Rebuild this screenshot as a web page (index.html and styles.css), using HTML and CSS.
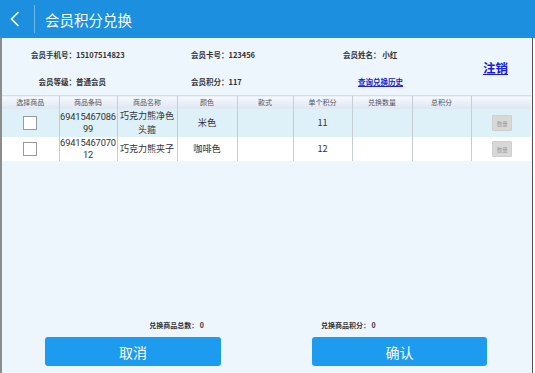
FILE: index.html
```html
<!DOCTYPE html>
<html lang="zh-CN">
<head>
    <meta charset="UTF-8">
    <title>会员积分兑换</title>
    <link rel="stylesheet" href="styles.css">
</head>
<body>
    <div class="topbar">
        <a class="back" href="#">
            <svg width="10" height="16" viewBox="0 0 10 16"><path d="M8.5 1 L1.5 8 L8.5 15" fill="none" stroke="#fff" stroke-width="1.6"/></svg>
        </a>
        <span class="divider"></span>
        <h1>会员积分兑换</h1>
    </div>

    <div class="screen">
        <div class="member-info">
            <div class="info-grid">
                <div class="item col1"><span class="lbl">会员手机号：</span>15107514823</div>
                <div class="item"><span>会员卡号：</span>123456</div>
                <div class="item"><span>会员姓名：</span>&nbsp;小红</div>
                <div class="item col1"><span class="lbl">会员等级：</span>普通会员</div>
                <div class="item"><span>会员积分：</span>117</div>
                <div class="item"><a class="history" href="#">查询兑换历史</a></div>
            </div>
            <a class="logout" href="#">注销</a>
        </div>

        <table class="goods">
            <colgroup>
                <col style="width:57px"><col style="width:58px"><col style="width:60px">
                <col style="width:60px"><col style="width:56px"><col style="width:59px">
                <col style="width:60px"><col style="width:59px"><col style="width:60px">
            </colgroup>
            <thead>
                <tr>
                    <th>选择商品</th><th>商品条码</th><th>商品名称</th><th>颜色</th><th>款式</th>
                    <th>单个积分</th><th>兑换数量</th><th>总积分</th><th></th>
                </tr>
            </thead>
            <tbody>
                <tr class="row-a">
                    <td><span class="check"></span></td>
                    <td class="code">69415467086<br>99</td>
                    <td class="name">巧克力熊净色<br>头箍</td>
                    <td>米色</td>
                    <td></td>
                    <td>11</td>
                    <td></td>
                    <td></td>
                    <td><span class="qty-btn">数量</span></td>
                </tr>
                <tr class="row-b">
                    <td><span class="check"></span></td>
                    <td class="code">69415467070<br>12</td>
                    <td class="name">巧克力熊夹子</td>
                    <td>咖啡色</td>
                    <td></td>
                    <td>12</td>
                    <td></td>
                    <td></td>
                    <td><span class="qty-btn">数量</span></td>
                </tr>
            </tbody>
        </table>

        <div class="spacer"></div>

        <div class="summary">
            <div class="sum-left">兑换商品总数：&nbsp;0</div>
            <div class="sum-right">兑换商品积分：&nbsp;0</div>
        </div>

        <div class="actions">
            <button class="btn cancel">取消</button>
            <button class="btn confirm">确认</button>
        </div>
    </div>
</body>
</html>
```

FILE: styles.css
```css
* { box-sizing: border-box; }
html, body { margin: 0; padding: 0; }
body { width: 535px; height: 373px; font-family: "Noto Sans CJK SC", "Noto Sans", sans-serif; background: #fff; display: flex; flex-direction: column; overflow: hidden; }

.topbar { height: 38px; background: #1c8fdf; display: flex; align-items: center; flex-shrink: 0; }
.back { width: 34px; height: 38px; display: flex; align-items: center; justify-content: center; padding-right: 4px; }
.divider { width: 1px; height: 28px; background: #6ab8ee; }
.topbar h1 { margin: 0 0 0 10px; color: #fff; font-size: 14.5px; font-weight: normal; }

.screen { flex: 1; display: flex; flex-direction: column; background: #eef6fd; border-left: 2px solid #8c8c8c; border-right: 1px solid #555; margin-right: 2px; }

.member-info { position: relative; height: 57px; }
.info-grid { display: grid; grid-template-columns: 189px 152px auto; grid-template-rows: 27px 27px; padding-top: 3px; }
.item { font-size: 7.5px; font-weight: bold; color: #333; display: flex; align-items: center; white-space: nowrap; }
.col1 .lbl { display: inline-block; width: 74px; text-align: right; }
.history { color: #2222cc; text-decoration: underline; margin-left: 15px; }
.logout { position: absolute; left: 481px; top: 20px; font-size: 12.5px; font-weight: bold; color: #1a1ad6; text-decoration: underline; }

.goods { border-collapse: collapse; table-layout: fixed; width: 529px; }
.goods th { height: 13px; padding: 0; font-size: 7px; font-weight: normal; color: #555; background: linear-gradient(#f6f9fd, #dde6f1); border-left: 1px solid #c8ced6; border-top: 1px solid #d6dde6; }
.goods td { padding: 0; font-size: 9.2px; line-height: 11.5px; color: #333; text-align: center; border-left: 1px solid #c6ccd2; white-space: nowrap; overflow: hidden; }
.goods td.code { font-family: Roboto, "Noto Sans", sans-serif; font-size: 9.3px; letter-spacing: -0.15px; }
.goods td.name { font-size: 9px; line-height: 13.2px; }
.goods th:first-child, .goods td:first-child { border-left: none; }
.row-a td { height: 28px; background: #def0f8; }
.row-b td { height: 24px; background: #fff; }
.check { display: inline-block; width: 14px; height: 14px; background: #fff; border: 1px solid #9a9a9a; vertical-align: middle; }
.qty-btn { display: inline-block; width: 20px; height: 16px; line-height: 16px; font-size: 5.5px; color: #9a9a9a; background: #d8d8d8; border: 1px solid #cfcfcf; border-radius: 1px; vertical-align: middle; margin-left: 2px; }

.spacer { flex: 1; }

.summary { display: flex; font-size: 7px; font-weight: bold; color: #333; height: 14px; align-items: center; margin-bottom: 5px; }
.sum-left { width: 202px; text-align: right; }
.sum-right { margin-left: 117px; }

.actions { display: flex; padding: 0 0 7px 43px; }
.btn { height: 29px; border: none; border-radius: 3px; background: #1d9bef; color: #fff; font-family: inherit; font-size: 14px; padding: 0; }
.cancel { width: 176px; }
.confirm { width: 175px; margin-left: 91px; }
```
